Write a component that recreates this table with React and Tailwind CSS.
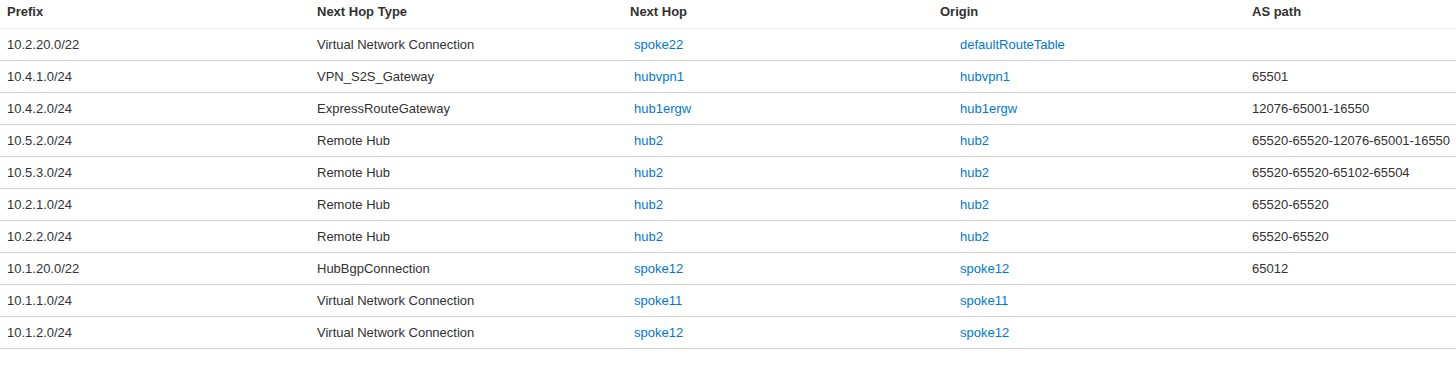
import React from 'react';

const routes = [
  { prefix: '10.2.20.0/22', type: 'Virtual Network Connection', hop: 'spoke22', origin: 'defaultRouteTable', path: '' },
  { prefix: '10.4.1.0/24', type: 'VPN_S2S_Gateway', hop: 'hubvpn1', origin: 'hubvpn1', path: '65501' },
  { prefix: '10.4.2.0/24', type: 'ExpressRouteGateway', hop: 'hub1ergw', origin: 'hub1ergw', path: '12076-65001-16550' },
  { prefix: '10.5.2.0/24', type: 'Remote Hub', hop: 'hub2', origin: 'hub2', path: '65520-65520-12076-65001-16550' },
  { prefix: '10.5.3.0/24', type: 'Remote Hub', hop: 'hub2', origin: 'hub2', path: '65520-65520-65102-65504' },
  { prefix: '10.2.1.0/24', type: 'Remote Hub', hop: 'hub2', origin: 'hub2', path: '65520-65520' },
  { prefix: '10.2.2.0/24', type: 'Remote Hub', hop: 'hub2', origin: 'hub2', path: '65520-65520' },
  { prefix: '10.1.20.0/22', type: 'HubBgpConnection', hop: 'spoke12', origin: 'spoke12', path: '65012' },
  { prefix: '10.1.1.0/24', type: 'Virtual Network Connection', hop: 'spoke11', origin: 'spoke11', path: '' },
  { prefix: '10.1.2.0/24', type: 'Virtual Network Connection', hop: 'spoke12', origin: 'spoke12', path: '' },
];

const cols = 'grid grid-cols-[310px_313px_310px_312px_1fr]';

export default function App() {
  return (
    <div className="w-full h-[365px] bg-white text-[13px] text-[#323130] font-['Liberation_Sans',Arial,sans-serif]">
      {/* header */}
      <div className={`${cols} h-[29px] border-b border-[#edebe9] leading-[17px] font-semibold pt-[3px]`}>
        <div className="pl-[7px]">Prefix</div>
        <div className="pl-[7px]">Next Hop Type</div>
        <div className="pl-[7px]">Next Hop</div>
        <div className="pl-[7px]">Origin</div>
        <div className="pl-[7px]">AS path</div>
      </div>

      {routes.map((r, i) => (
        <div key={i} className={`${cols} h-[32px] items-center border-b border-[#d2d0ce] leading-[17px]`}>
          <div className="pl-[7px]">{r.prefix}</div>
          <div className="pl-[7px]">{r.type}</div>
          <div className="pl-[11px]">
            <a className="text-[#0078d4]">{r.hop}</a>
          </div>
          <div className="pl-[27px]">
            <a className="text-[#0078d4]">{r.origin}</a>
          </div>
          <div className="pl-[7px]">{r.path}</div>
        </div>
      ))}
    </div>
  );
}
